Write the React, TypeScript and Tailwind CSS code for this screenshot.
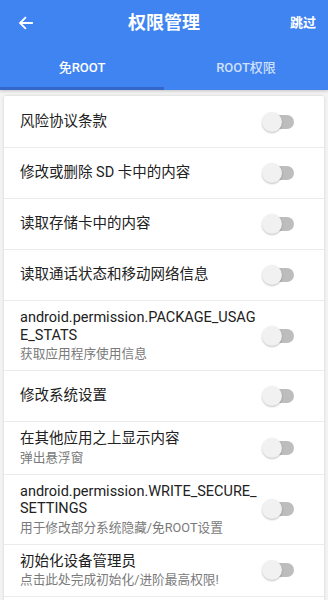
import React from "react";

type Item = { title: string; sub?: string };

const items: Item[] = [
  { title: "风险协议条款" },
  { title: "修改或删除 SD 卡中的内容" },
  { title: "读取存储卡中的内容" },
  { title: "读取通话状态和移动网络信息" },
  { title: "android.permission.PACKAGE_USAGE_STATS", sub: "获取应用程序使用信息" },
  { title: "修改系统设置" },
  { title: "在其他应用之上显示内容", sub: "弹出悬浮窗" },
  { title: "android.permission.WRITE_SECURE_SETTINGS", sub: "用于修改部分系统隐藏/免ROOT设置" },
  { title: "初始化设备管理员", sub: "点击此处完成初始化/进阶最高权限!" },
];

function Toggle() {
  return (
    <div className="relative w-[32px] h-[20px] shrink-0">
      <div className="absolute left-[4px] top-[3px] w-[28px] h-[14px] rounded-full bg-[#bdbdbd]" />
      <div className="absolute left-0 top-0 w-[20px] h-[20px] rounded-full bg-[#f1f1f1] shadow-[0_1px_2px_rgba(0,0,0,0.25)]" />
    </div>
  );
}

export default function App() {
  return (
    <div
      className="w-[328px] h-[600px] overflow-hidden bg-[#f3f3f3]"
      style={{ fontFamily: 'Roboto, "Noto Sans CJK SC", sans-serif' }}
    >
      <div className="bg-[#3f84f1] shadow-[0_1px_3px_rgba(0,0,0,0.2)]">
        <div className="h-[45px] flex items-center px-[16px] relative">
          <svg width="18" height="18" viewBox="0 0 24 24" className="ml-[1px]">
            <path d="M20 12H5M11 5l-7 7 7 7" stroke="white" strokeWidth="2.4" fill="none" strokeLinecap="square" />
          </svg>
          <div className="absolute left-0 right-0 text-center text-white text-[18px] font-bold pointer-events-none">
            权限管理
          </div>
          <div className="ml-auto text-white text-[13px] font-bold mr-[-4px]">跳过</div>
        </div>
        <div className="flex h-[45px]">
          <div className="flex-1 flex flex-col">
            <div className="flex-1 flex items-center justify-center text-white text-[13px] font-medium pt-[4px]">免ROOT</div>
            <div className="h-[3px] bg-[#3467c9]" />
          </div>
          <div className="flex-1 flex flex-col">
            <div className="flex-1 flex items-center justify-center text-white/75 text-[13px] font-medium pt-[4px]">ROOT权限</div>
            <div className="h-[3px]" />
          </div>
        </div>
      </div>
      <div className="mx-[4px] mt-[6px] bg-white shadow-[0_0_3px_rgba(0,0,0,0.15)] rounded-[2px]">
        {items.map((it, i) => (
          <div
            key={i}
            className={`flex items-center min-h-[51px] py-[8px] pl-[16px] ${i > 0 ? "border-t border-[#ebebeb]" : ""}`}
          >
            <div className="w-[240px] break-all">
              <div className="text-[14.5px] leading-[17.5px] text-[#212121]">{it.title}</div>
              {it.sub && <div className="text-[12.7px] leading-[17px] mt-[1px] text-[#7a7a7a]">{it.sub}</div>}
            </div>
            <div className="ml-[2px]">
              <Toggle />
            </div>
          </div>
        ))}
        <div className="h-[51px] border-t border-[#ebebeb]" />
      </div>
    </div>
  );
}
